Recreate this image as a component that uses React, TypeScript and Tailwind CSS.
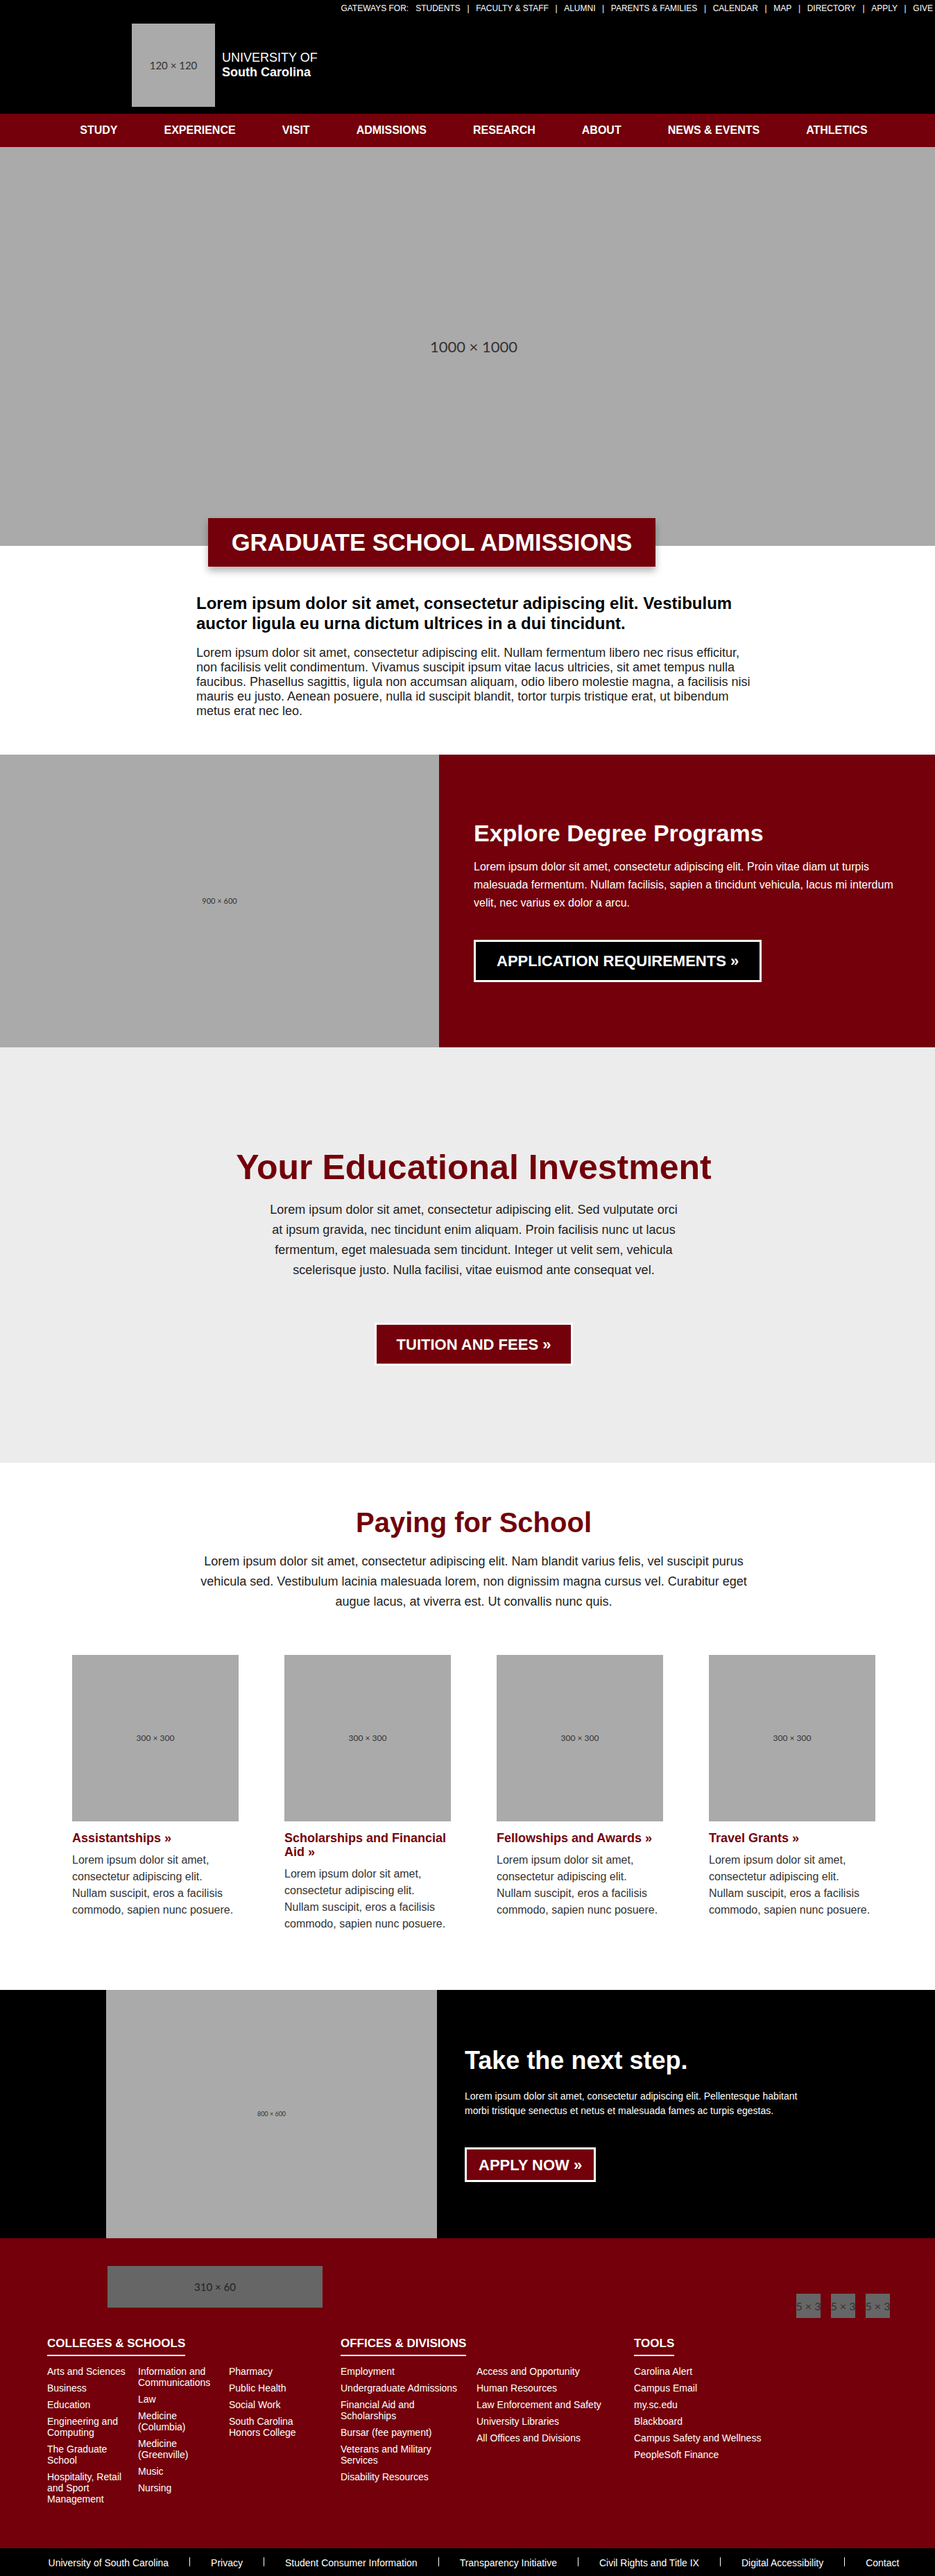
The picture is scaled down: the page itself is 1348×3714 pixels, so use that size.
import React, { Fragment } from "react";

const gateways = ["STUDENTS", "FACULTY & STAFF", "ALUMNI", "PARENTS & FAMILIES", "CALENDAR", "MAP", "DIRECTORY", "APPLY", "GIVE"];
const navItems = ["STUDY", "EXPERIENCE", "VISIT", "ADMISSIONS", "RESEARCH", "ABOUT", "NEWS & EVENTS", "ATHLETICS"];

const cards = [
  { title: "Assistantships »" },
  { title: "Scholarships and Financial Aid »" },
  { title: "Fellowships and Awards »" },
  { title: "Travel Grants »" },
];

const colleges = [
  ["Arts and Sciences", "Business", "Education", "Engineering and Computing", "The Graduate School", "Hospitality, Retail and Sport Management"],
  ["Information and Communications", "Law", "Medicine (Columbia)", "Medicine (Greenville)", "Music", "Nursing"],
  ["Pharmacy", "Public Health", "Social Work", "South Carolina Honors College"],
];

const offices = [
  ["Employment", "Undergraduate Admissions", "Financial Aid and Scholarships", "Bursar (fee payment)", "Veterans and Military Services", "Disability Resources"],
  ["Access and Opportunity", "Human Resources", "Law Enforcement and Safety", "University Libraries", "All Offices and Divisions"],
];

const tools = ["Carolina Alert", "Campus Email", "my.sc.edu", "Blackboard", "Campus Safety and Wellness", "PeopleSoft Finance"];

const bottomLinks = ["University of South Carolina", "Privacy", "Student Consumer Information", "Transparency Initiative", "Civil Rights and Title IX", "Digital Accessibility", "Contact"];

function LinkList({ items }: { items: string[] }) {
  return (
    <div className="flex flex-col gap-[8px]">
      {items.map((t) => (
        <a key={t} className="text-white">
          {t}
        </a>
      ))}
    </div>
  );
}

function FooterHeading({ children }: { children: React.ReactNode }) {
  return (
    <h3 className="border-b-2 border-white pb-[6px] text-[17px] leading-[20px] font-bold">{children}</h3>
  );
}

export default function App() {
  return (
    <div className="w-full overflow-hidden bg-white">
      <div className="w-[1366px] font-['Liberation_Sans',Arial,sans-serif] text-[#222]">
        {/* Header */}
        <header className="bg-black pt-[5px] pb-[10px] text-white">
          <div className="flex justify-end pr-[21px] text-[12px] leading-[14px]">
            <span className="mr-[10px]">GATEWAYS FOR:</span>
            {gateways.map((g, i) => (
              <Fragment key={g}>
                {i > 0 && <span className="mx-[9.6px]">|</span>}
                <a>{g}</a>
              </Fragment>
            ))}
          </div>
          <div className="mt-[15px] flex items-center pl-[190px]">
            <div className="flex h-[120px] w-[120px] items-center justify-center bg-[#aaaaaa] font-['Lato',sans-serif] text-[15px] text-[#333]">
              120 × 120
            </div>
            <div className="ml-[10px] text-[18px] leading-[21px]">
              <div>UNIVERSITY OF</div>
              <div className="font-bold">South Carolina</div>
            </div>
          </div>
        </header>

        {/* Nav */}
        <nav className="flex h-[48px] items-center justify-center gap-[67px] bg-[#73000a] text-[16px] font-bold text-white">
          {navItems.map((n) => (
            <a key={n}>{n}</a>
          ))}
        </nav>

        {/* Hero */}
        <div className="flex h-[575px] items-center justify-center bg-[#aaaaaa] font-['Lato',sans-serif] text-[22px] text-[#333]">
          1000 × 1000
        </div>

        {/* Title box */}
        <div className="relative z-10 -mt-[40px] ml-[300px] flex h-[70px] w-[645px] items-center justify-center bg-[#73000a] shadow-[0_6px_10px_rgba(0,0,0,0.3)]">
          <h1 className="text-[34.6px] leading-none font-bold text-white">GRADUATE SCHOOL ADMISSIONS</h1>
        </div>

        {/* Intro */}
        <section className="mx-auto w-[800px] pt-[38px] pb-[52px]">
          <h2 className="text-[24px] leading-[29px] font-bold text-black">
            Lorem ipsum dolor sit amet, consectetur adipiscing elit. Vestibulum auctor ligula eu urna dictum ultrices in a dui tincidunt.
          </h2>
          <p className="mt-[18px] text-[18px] leading-[21px] text-[#222]">
            Lorem ipsum dolor sit amet, consectetur adipiscing elit. Nullam fermentum libero nec risus efficitur, non facilisis velit condimentum. Vivamus suscipit ipsum vitae lacus ultricies, sit amet tempus nulla faucibus. Phasellus sagittis, ligula non accumsan aliquam, odio libero molestie magna, a facilisis nisi mauris eu justo. Aenean posuere, nulla id suscipit blandit, tortor turpis tristique erat, ut bibendum metus erat nec leo.
          </p>
        </section>

        {/* Explore Degree Programs */}
        <section className="flex h-[422px]">
          <div className="flex w-[633px] items-center justify-center bg-[#aaaaaa] font-['Lato',sans-serif] text-[11px] text-[#333]">
            900 × 600
          </div>
          <div className="flex flex-1 flex-col justify-center bg-[#73000a] pl-[50px] text-white">
            <h2 className="text-[34px] leading-[39px] font-bold">Explore Degree Programs</h2>
            <p className="mt-[16px] w-[615px] text-[16px] leading-[26px]">
              Lorem ipsum dolor sit amet, consectetur adipiscing elit. Proin vitae diam ut turpis malesuada fermentum. Nullam facilisis, sapien a tincidunt vehicula, lacus mi interdum velit, nec varius ex dolor a arcu.
            </p>
            <a className="mt-[40px] flex h-[61px] items-center self-start border-[3px] border-white bg-black px-[30px] text-[22px] font-bold text-white">
              APPLICATION REQUIREMENTS »
            </a>
          </div>
        </section>

        {/* Educational Investment */}
        <section className="flex flex-col items-center bg-[#ececec] pt-[143px] pb-[140px] text-center">
          <h2 className="text-[50px] leading-[60px] font-bold text-[#73000a]">Your Educational Investment</h2>
          <p className="mt-[17px] w-[600px] text-[18px] leading-[29px] text-[#222]">
            Lorem ipsum dolor sit amet, consectetur adipiscing elit. Sed vulputate orci at ipsum gravida, nec tincidunt enim aliquam. Proin facilisis nunc ut lacus fermentum, eget malesuada sem tincidunt. Integer ut velit sem, vehicula scelerisque justo. Nulla facilisi, vitae euismod ante consequat vel.
          </p>
          <a className="mt-[61px] flex h-[62px] items-center border-[3px] border-white bg-[#73000a] px-[29px] text-[22px] font-bold text-white">
            TUITION AND FEES »
          </a>
        </section>

        {/* Paying for School */}
        <section className="pt-[63px] pb-[83px]">
          <h2 className="text-center text-[40px] leading-[46px] font-bold text-[#73000a]">Paying for School</h2>
          <p className="mx-auto mt-[19px] w-[800px] text-center text-[18px] leading-[29px] text-[#222]">
            Lorem ipsum dolor sit amet, consectetur adipiscing elit. Nam blandit varius felis, vel suscipit purus vehicula sed. Vestibulum lacinia malesuada lorem, non dignissim magna cursus vel. Curabitur eget augue lacus, at viverra est. Ut convallis nunc quis.
          </p>
          <div className="mt-[62px] flex items-start justify-center gap-[66px]">
            {cards.map((c) => (
              <div key={c.title} className="w-[240px]">
                <div className="flex h-[240px] items-center justify-center bg-[#aaaaaa] font-['Lato',sans-serif] text-[12px] text-[#333]">
                  300 × 300
                </div>
                <h3 className="mt-[14px] text-[18px] leading-[20px] font-bold text-[#73000a]">{c.title}</h3>
                <p className="mt-[10px] text-[16px] leading-[24px] text-[#333]">
                  Lorem ipsum dolor sit amet, consectetur adipiscing elit. Nullam suscipit, eros a facilisis commodo, sapien nunc posuere.
                </p>
              </div>
            ))}
          </div>
        </section>

        {/* Take the next step */}
        <section className="flex h-[358px] bg-black">
          <div className="ml-[153px] flex w-[477px] items-center justify-center bg-[#aaaaaa] font-['Lato',sans-serif] text-[9px] text-[#333]">
            800 × 600
          </div>
          <div className="ml-[40px] flex flex-col justify-center text-white">
            <h2 className="text-[36px] leading-[41px] font-bold">Take the next step.</h2>
            <p className="mt-[21px] w-[500px] text-[14px] leading-[21px]">
              Lorem ipsum dolor sit amet, consectetur adipiscing elit. Pellentesque habitant morbi tristique senectus et netus et malesuada fames ac turpis egestas.
            </p>
            <a className="mt-[42px] flex h-[50px] items-center self-start border-[3px] border-white bg-[#73000a] px-[17px] text-[22px] font-bold text-white">
              APPLY NOW »
            </a>
          </div>
        </section>

        {/* Footer */}
        <footer className="bg-[#73000a] pt-[40px] pb-[63px] text-white">
          <div className="flex h-[75px] justify-between pr-[83px] pl-[155px]">
            <div className="flex h-[60px] w-[310px] items-center justify-center bg-[#666666] font-['Lato',sans-serif] text-[15px] text-[#222]">
              310 × 60
            </div>
            <div className="mt-[40px] flex gap-[15px]">
              {[0, 1, 2].map((i) => (
                <div
                  key={i}
                  className="flex h-[35px] w-[35px] items-center justify-center overflow-visible bg-[#666666] font-['Lato',sans-serif] text-[16px] whitespace-nowrap text-[#333]"
                >
                  5 × 3
                </div>
              ))}
            </div>
          </div>
          <div className="mt-[27px] grid grid-cols-[423px_423px_auto] pl-[68px] text-[14px] leading-[16px]">
            <div className="flex flex-col items-start">
              <FooterHeading>COLLEGES &amp; SCHOOLS</FooterHeading>
              <div className="mt-[14px] grid grid-cols-[123px_123px_123px] gap-x-[8px]">
                {colleges.map((col, i) => (
                  <LinkList key={i} items={col} />
                ))}
              </div>
            </div>
            <div className="flex flex-col items-start">
              <FooterHeading>OFFICES &amp; DIVISIONS</FooterHeading>
              <div className="mt-[14px] grid grid-cols-[182px_auto] gap-x-[14px]">
                {offices.map((col, i) => (
                  <LinkList key={i} items={col} />
                ))}
              </div>
            </div>
            <div className="flex flex-col items-start">
              <FooterHeading>TOOLS</FooterHeading>
              <div className="mt-[14px]">
                <LinkList items={tools} />
              </div>
            </div>
          </div>
        </footer>

        {/* Bottom bar */}
        <div className="flex h-[40px] items-start justify-center gap-[30px] bg-black pt-[13px] text-[14px] leading-[16px] text-white">
          {bottomLinks.map((l, i) => (
            <Fragment key={l}>
              {i > 0 && <span className="h-[13px] w-[1px] bg-white" />}
              <a>{l}</a>
            </Fragment>
          ))}
        </div>
      </div>
    </div>
  );
}
